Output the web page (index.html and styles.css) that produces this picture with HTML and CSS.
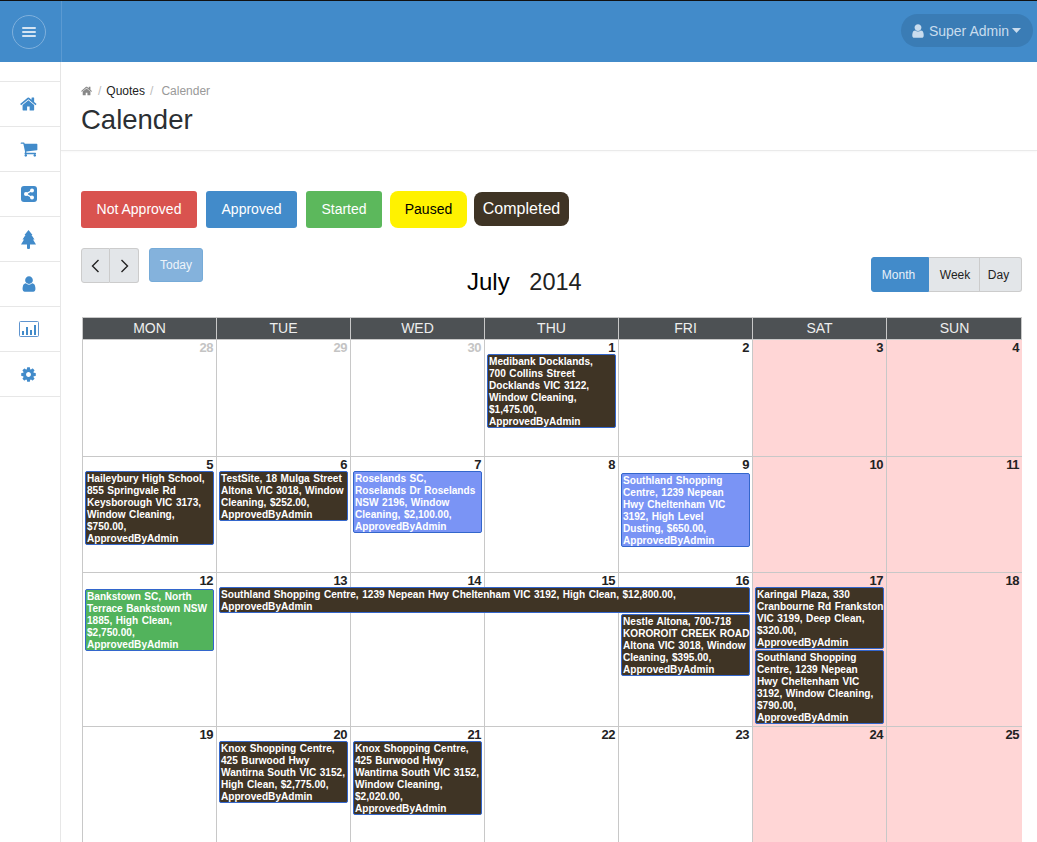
FILE: index.html
```html
<!DOCTYPE html>
<html>
<head>
  <meta charset="UTF-8">
  <title>Calender</title>
  <link rel="stylesheet" href="styles.css">
</head>
<body>
  <header class="top-bar">
    <div class="menu-box">
      <button class="menu-toggle">
        <svg width="14" height="12" viewBox="0 0 14 12"><path d="M1 2h12M1 6h12M1 10h12" stroke="#d5e4f2" stroke-width="2" stroke-linecap="round"/></svg>
      </button>
    </div>
    <div class="user-pill">
      <svg class="user-icon" width="16" height="16" viewBox="0 0 1792 1792"><path fill="#c9dcee" d="M1536 1399q0 109-62.5 187t-150.5 78h-854q-88 0-150.5-78t-62.5-187q0-85 8.5-160.5t31.5-152 58.5-131 94-89 134.5-34.5q131 128 313 128t313-128q76 0 134.5 34.5t94 89 58.5 131 31.5 152 8.5 160.5zm-256-887q0 159-112.5 271.5t-271.5 112.5-271.5-112.5-112.5-271.5 112.5-271.5 271.5-112.5 271.5 112.5 112.5 271.5z"/></svg>
      <span>Super Admin</span>
      <svg width="9" height="5" viewBox="0 0 9 5"><path fill="#c9dcee" d="M0 0h9L4.5 5z"/></svg>
    </div>
  </header>

  <div class="shell">
    <nav class="side-nav">
      <a class="side-item"><svg width="18" height="18" viewBox="0 0 1792 1792"><path d="M1408 992v480q0 26-19 45t-45 19h-384v-384h-256v384h-384q-26 0-45-19t-19-45v-480q0-1 .5-3t.5-3l575-474 575 474q1 2 1 6zm223-69l-62 74q-8 9-21 11h-3q-13 0-21-7l-692-577-692 577q-12 8-24 7-13-2-21-11l-62-74q-8-10-7-23.5t11-21.5l719-599q32-26 76-26t76 26l244 204v-195q0-14 9-23t23-9h192q14 0 23 9t9 23v408l219 182q10 8 11 21.5t-7 23.5z"/></svg></a>
      <a class="side-item"><svg width="18" height="18" viewBox="0 0 1792 1792"><path d="M704 1536q0 52-38 90t-90 38-90-38-38-90 38-90 90-38 90 38 38 90zm896 0q0 52-38 90t-90 38-90-38-38-90 38-90 90-38 90 38 38 90zm128-1088v512q0 24-16.5 42.5t-40.5 21.5l-1044 122q13 60 13 70 0 16-24 64h920q26 0 45 19t19 45-19 45-45 19h-1024q-26 0-45-19t-19-45q0-11 8-31.5t16-36 21.5-40 15.5-29.5l-177-823h-204q-26 0-45-19t-19-45 19-45 45-19h256q16 0 28.5 6.5t19.5 15.5 13 24.5 8 26 5.5 29.5 4.5 26h1201q26 0 45 19t19 45z"/></svg></a>
      <a class="side-item"><svg width="16" height="16" viewBox="0 0 16 16"><rect width="16" height="16" rx="3"/><path d="M11 4.5L5 8l6 3.5" stroke="#fff" stroke-width="1.4" fill="none"/><circle cx="11" cy="4.5" r="2" fill="#fff"/><circle cx="5" cy="8" r="2" fill="#fff"/><circle cx="11" cy="11.5" r="2" fill="#fff"/></svg></a>
      <a class="side-item"><svg width="15" height="19" viewBox="0 0 15 19"><path d="M7.5 0L11.5 5H10.5L13.5 9.5H12L15 14.5H9V18q0 1-1 1H7q-1 0-1-1v-3.5H0L3 9.5H1.5L4.5 5H3.5z"/></svg></a>
      <a class="side-item"><svg width="18" height="18" viewBox="0 0 1792 1792"><path d="M1536 1399q0 109-62.5 187t-150.5 78h-854q-88 0-150.5-78t-62.5-187q0-85 8.5-160.5t31.5-152 58.5-131 94-89 134.5-34.5q131 128 313 128t313-128q76 0 134.5 34.5t94 89 58.5 131 31.5 152 8.5 160.5zm-256-887q0 159-112.5 271.5t-271.5 112.5-271.5-112.5-112.5-271.5 112.5-271.5 271.5-112.5 271.5 112.5 112.5 271.5z"/></svg></a>
      <a class="side-item"><svg width="20" height="16" viewBox="0 0 20 16"><rect x=".5" y=".5" width="19" height="15" rx="1" fill="none" stroke="#5f94cf"/><path d="M3 10h2v4H3zM7 6h2v8H7zM11 9h2v5h-2zM15 4h2v10h-2z"/></svg></a>
      <a class="side-item"><svg width="17" height="17" viewBox="0 0 1792 1792"><path d="M1152 896q0-106-75-181t-181-75-181 75-75 181 75 181 181 75 181-75 75-181zm512-109v222q0 12-8 23t-20 13l-185 28q-19 54-39 91 35 50 107 138 10 12 10 25t-9 23q-27 37-99 108t-94 71q-12 0-26-9l-138-108q-44 23-91 38-16 136-29 186-7 28-36 28h-222q-14 0-24.5-8.5t-11.5-21.5l-28-184q-49-16-90-37l-141 107q-10 9-25 9-14 0-25-11-126-114-165-168-7-10-7-23 0-12 8-23 15-21 51-66.5t54-70.5q-27-50-41-99l-183-27q-13-2-21-12.5t-8-23.5v-222q0-12 8-23t19-13l186-28q14-46 39-92-40-57-107-138-10-12-10-24 0-10 9-23 26-36 98.5-107.5t94.5-71.5q13 0 26 10l138 107q44-23 91-38 16-136 29-186 7-28 36-28h222q14 0 24.5 8.5t11.5 21.5l28 184q49 16 90 37l142-107q9-9 24-9 13 0 25 10 129 119 165 170 7 8 7 22 0 12-8 23-15 21-51 66.5t-54 70.5q26 50 41 98l183 28q13 2 21 12.5t8 23.5z"/></svg></a>
    </nav>

    <main class="content">
      <section class="page-head">
        <div class="crumbs">
          <svg width="12" height="12" viewBox="0 0 1792 1792"><path fill="#888" d="M1408 992v480q0 26-19 45t-45 19h-384v-384h-256v384h-384q-26 0-45-19t-19-45v-480q0-1 .5-3t.5-3l575-474 575 474q1 2 1 6zm223-69l-62 74q-8 9-21 11h-3q-13 0-21-7l-692-577-692 577q-12 8-24 7-13-2-21-11l-62-74q-8-10-7-23.5t11-21.5l719-599q32-26 76-26t76 26l244 204v-195q0-14 9-23t23-9h192q14 0 23 9t9 23v408l219 182q10 8 11 21.5t-7 23.5z"/></svg>
          <span class="crumb-sep">/</span>
          <a class="crumb-link">Quotes</a>
          <span class="crumb-sep">/</span>
          <span class="crumb-now">Calender</span>
        </div>
        <h1 class="page-title">Calender</h1>
      </section>

      <section class="body-area">
        <div class="legend">
          <span class="tag tag-red">Not Approved</span>
          <span class="tag tag-blue">Approved</span>
          <span class="tag tag-green">Started</span>
          <span class="tag tag-yellow">Paused</span>
          <span class="tag tag-dark">Completed</span>
        </div>

        <div class="toolbar">
          <div class="tool-left">
            <div class="btn-group">
              <button class="btn btn-arrow"><svg width="9" height="14" viewBox="0 0 9 14"><path d="M7.5 1L1.5 7l6 6" fill="none" stroke="#222" stroke-width="1.4"/></svg></button>
              <button class="btn btn-arrow"><svg width="9" height="14" viewBox="0 0 9 14"><path d="M1.5 1l6 6-6 6" fill="none" stroke="#222" stroke-width="1.4"/></svg></button>
            </div>
            <button class="btn-today">Today</button>
          </div>
          <h2 class="month-title"><span class="month-name">July</span> <span class="month-year">2014</span></h2>
          <div class="btn-group view-group">
            <button class="btn btn-view btn-active">Month</button>
            <button class="btn btn-view">Week</button>
            <button class="btn btn-view btn-day">Day</button>
          </div>
        </div>

        <div class="calendar">
          <div class="cal-head">
            <div>MON</div><div>TUE</div><div>WED</div><div>THU</div><div>FRI</div><div>SAT</div><div>SUN</div>
          </div>

          <div class="week week-1">
            <div class="day muted">28</div>
            <div class="day muted">29</div>
            <div class="day muted">30</div>
            <div class="day">1</div>
            <div class="day">2</div>
            <div class="day weekend">3</div>
            <div class="day weekend">4</div>
            <div class="event col-4">Medibank Docklands,<br>700 Collins Street<br>Docklands VIC 3122,<br>Window Cleaning,<br>$1,475.00,<br>ApprovedByAdmin</div>
          </div>

          <div class="week week-2">
            <div class="day">5</div>
            <div class="day">6</div>
            <div class="day">7</div>
            <div class="day">8</div>
            <div class="day">9</div>
            <div class="day weekend">10</div>
            <div class="day weekend">11</div>
            <div class="event col-1">Haileybury High School,<br>855 Springvale Rd<br>Keysborough VIC 3173,<br>Window Cleaning,<br>$750.00,<br>ApprovedByAdmin</div>
            <div class="event col-2">TestSite, 18 Mulga Street<br>Altona VIC 3018, Window<br>Cleaning, $252.00,<br>ApprovedByAdmin</div>
            <div class="event event-blue col-3">Roselands SC,<br>Roselands Dr Roselands<br>NSW 2196, Window<br>Cleaning, $2,100.00,<br>ApprovedByAdmin</div>
            <div class="event event-blue event-low col-5">Southland Shopping<br>Centre, 1239 Nepean<br>Hwy Cheltenham VIC<br>3192, High Level<br>Dusting, $650.00,<br>ApprovedByAdmin</div>
          </div>

          <div class="week week-3">
            <div class="day">12</div>
            <div class="day">13</div>
            <div class="day">14</div>
            <div class="day">15</div>
            <div class="day">16</div>
            <div class="day weekend">17</div>
            <div class="day weekend">18</div>
            <div class="event event-green event-low event-tall col-1">Bankstown SC, North<br>Terrace Bankstown NSW<br>1885, High Clean,<br>$2,750.00,<br>ApprovedByAdmin</div>
            <div class="event event-wide">Southland Shopping Centre, 1239 Nepean Hwy Cheltenham VIC 3192, High Clean, $12,800.00,<br>ApprovedByAdmin</div>
            <div class="event event-under col-5">Nestle Altona, 700-718<br>KOROROIT CREEK ROAD<br>Altona VIC 3018, Window<br>Cleaning, $395.00,<br>ApprovedByAdmin</div>
            <div class="event-stack col-6">
              <div class="event">Karingal Plaza, 330<br>Cranbourne Rd Frankston<br>VIC 3199, Deep Clean,<br>$320.00,<br>ApprovedByAdmin</div>
              <div class="event">Southland Shopping<br>Centre, 1239 Nepean<br>Hwy Cheltenham VIC<br>3192, Window Cleaning,<br>$790.00,<br>ApprovedByAdmin</div>
            </div>
          </div>

          <div class="week week-4">
            <div class="day">19</div>
            <div class="day">20</div>
            <div class="day">21</div>
            <div class="day">22</div>
            <div class="day">23</div>
            <div class="day weekend">24</div>
            <div class="day weekend">25</div>
            <div class="event col-2">Knox Shopping Centre,<br>425 Burwood Hwy<br>Wantirna South VIC 3152,<br>High Clean, $2,775.00,<br>ApprovedByAdmin</div>
            <div class="event col-3">Knox Shopping Centre,<br>425 Burwood Hwy<br>Wantirna South VIC 3152,<br>Window Cleaning,<br>$2,020.00,<br>ApprovedByAdmin</div>
          </div>
        </div>
      </section>
    </main>
  </div>
</body>
</html>
```

FILE: styles.css
```css
html, body {
  height: 100%;
  overflow: hidden;
}

body {
  margin: 0;
  background-color: #ffffff;
  font-family: "Liberation Sans", Arial, sans-serif;
  font-size: 14px;
  color: #222222;
}

/* top bar */
.top-bar {
  height: 61px;
  border-top: 1px solid #111111;
  background-color: #428bca;
  display: flex;
  justify-content: space-between;
  align-items: center;
  padding-right: 4px;
}

.menu-box {
  width: 62px;
  height: 61px;
  border-right: 1px solid #5b9ad2;
  display: flex;
  align-items: center;
  justify-content: center;
  padding-right: 4px;
  box-sizing: border-box;
  flex-shrink: 0;
}

.menu-toggle {
  width: 34px;
  height: 34px;
  padding: 0;
  border: 1px solid #7fb0dc;
  border-radius: 50%;
  background: none;
  display: flex;
  align-items: center;
  justify-content: center;
}

.user-pill {
  height: 33px;
  width: 132px;
  margin-bottom: 2px;
  padding-right: 3px;
  box-sizing: border-box;
  border-radius: 17px;
  background-color: #3a7cb5;
  color: #c9dcee;
  display: flex;
  align-items: center;
  justify-content: center;
  gap: 3px;
}

/* sidebar */
.shell {
  display: flex;
  height: 780px;
}

.side-nav {
  width: 60px;
  flex-shrink: 0;
  padding-top: 19px;
  border-right: 1px solid #e7e7e7;
}

.side-item {
  height: 44px;
  border-top: 1px solid #e7e7e7;
  display: flex;
  align-items: center;
  justify-content: center;
  fill: #428bca;
  padding-right: 3px;
}

.side-item:last-child {
  border-bottom: 1px solid #e7e7e7;
}

/* page heading */
.content {
  flex: 1;
  min-width: 0;
}

.page-head {
  height: 89px;
  box-sizing: border-box;
  padding: 22px 20px 0;
  border-bottom: 1px solid #eaeaea;
  box-shadow: 0 1px 2px rgba(0, 0, 0, 0.03);
}

.crumbs {
  display: flex;
  align-items: center;
  height: 14px;
  font-size: 12px;
}

.crumb-sep {
  color: #bbbbbb;
  margin: 0 5px;
}

.crumb-link {
  color: #222222;
}

.crumb-now {
  color: #999999;
  margin-left: 3px;
}

.page-title {
  margin: 5px 0 0;
  font-size: 27.5px;
  font-weight: 400;
  line-height: 34px;
  color: #2b2f33;
}

/* legend */
.body-area {
  padding: 40px 15px 0 20px;
}

.legend {
  display: flex;
  align-items: flex-start;
}

.tag {
  height: 37px;
  line-height: 37px;
  text-align: center;
  border-radius: 3px;
  color: #ffffff;
  box-sizing: border-box;
}

.tag-red { width: 116px; background-color: #d9534f; margin-right: 9px; }
.tag-blue { width: 91px; background-color: #428bca; margin-right: 9px; line-height: 36px; }
.tag-green { width: 76px; background-color: #5cb85c; margin-right: 8px; }

.tag-yellow {
  width: 77px;
  background-color: #fff200;
  color: #000000;
  border-radius: 8px;
  margin-right: 7px;
}

.tag-dark {
  width: 95px;
  background-color: #3f3425;
  height: 34px;
  line-height: 34px;
  margin-top: 1px;
  border-radius: 8px;
  font-size: 16px;
}

/* calendar toolbar */
.toolbar {
  display: grid;
  grid-template-columns: 386px 1fr auto;
  margin-top: 20px;
  height: 69px;
}

.tool-left {
  display: flex;
  align-items: flex-start;
  gap: 10px;
}

.btn-group {
  display: flex;
}

.btn {
  height: 35px;
  padding: 0;
  background-color: #e3e6e9;
  border: 1px solid #cccccc;
  border-left-width: 0;
  font-family: inherit;
  font-size: 12px;
  color: #222222;
}

.btn:first-child {
  border-left-width: 1px;
  border-radius: 3px 0 0 3px;
}

.btn:last-child {
  border-radius: 0 3px 3px 0;
}

.btn-arrow {
  width: 29px;
  display: flex;
  align-items: center;
  justify-content: center;
}

.btn-today {
  width: 54px;
  height: 34px;
  padding: 0;
  border: 1px solid #76abd8;
  border-radius: 3px;
  background-color: #84b2dc;
  color: #eef4fa;
  font-family: inherit;
  font-size: 12px;
}

.month-title {
  margin: 18px 0 0;
  font-size: 24px;
  font-weight: 400;
  line-height: 32px;
  color: #222222;
}

.month-name {
  color: #000000;
  margin-right: 13px;
}

.month-year {
  font-size: 23.5px;
}

.view-group {
  margin-top: 9px;
  align-self: start;
}

.btn-view {
  width: 51px;
  padding-left: 2px;
}

.btn-active {
  width: 58px;
  padding: 0 3px 0 0;
  background-color: #428bca;
  border-color: #428bca;
  color: #e8f1f9;
}

.btn-day {
  width: 42px;
  padding: 0 4px 0 0;
}

/* calendar grid */
.calendar {
  margin-left: 1px;
}

.cal-head {
  display: grid;
  grid-template-columns: repeat(6, 134px) 135px;
  border: 1px solid #c8c8c8;
  background-color: #4d5154;
}

.cal-head div {
  height: 21px;
  line-height: 20px;
  text-align: center;
  color: #eeeeee;
  border-right: 1px solid #c8c8c8;
}

.cal-head div:last-child {
  border-right: 0;
}

.week {
  display: grid;
  grid-template-columns: repeat(6, 134px) 135px;
  grid-template-rows: 14px auto auto 1fr;
  border-left: 1px solid #c8c8c8;
  border-right: 1px solid #c8c8c8;
}

.week-1 { height: 117px; }
.week-2 { height: 116px; }
.week-3 { height: 154px; }
.week-4 { height: 154px; }

.day {
  grid-row: 1 / -1;
  border-right: 1px solid #c8c8c8;
  border-bottom: 1px solid #c8c8c8;
  padding: 1px 3px 0 0;
  text-align: right;
  font-size: 13px;
  font-weight: 700;
  line-height: 14px;
  letter-spacing: -0.5px;
  color: #222222;
}

.day:nth-child(1) { grid-column: 1; }
.day:nth-child(2) { grid-column: 2; }
.day:nth-child(3) { grid-column: 3; }
.day:nth-child(4) { grid-column: 4; }
.day:nth-child(5) { grid-column: 5; }
.day:nth-child(6) { grid-column: 6; }
.day:nth-child(7) { grid-column: 7; border-right: 0; }

.muted {
  color: #c4c4c4;
}

.weekend {
  background-color: #ffd6d6;
}

/* events */
.event {
  grid-row: 2;
  align-self: start;
  margin: 0 3px 0 2px;
  padding: 1px 0 0 1px;
  border: 1px solid #3366cc;
  border-radius: 2px;
  background-color: #3f3425;
  color: #ffffff;
  font-size: 10.1px;
  font-weight: 700;
  line-height: 12px;
  word-spacing: 0.7px;
  white-space: nowrap;
}

/* text sits one pixel low, the box keeps its height */
.event::after {
  content: "";
  display: block;
  margin-top: -1px;
}

.event-blue { background-color: #7a94f5; }
.event-green { background-color: #52b35c; }
.event-low { margin-top: 2px; }
.event-tall { grid-row: 2 / -1; }
.event-wide { grid-column: 2 / span 4; }
.event-under { grid-row: 3; margin-top: 1px; }

.event-stack {
  grid-row: 2 / -1;
  display: flex;
  flex-direction: column;
  align-self: start;
}

.event-stack .event {
  align-self: stretch;
  margin-bottom: 1px;
}

.col-1 { grid-column: 1; }
.col-2 { grid-column: 2; }
.col-3 { grid-column: 3; }
.col-4 { grid-column: 4; }
.col-5 { grid-column: 5; }
.col-6 { grid-column: 6; }
```
